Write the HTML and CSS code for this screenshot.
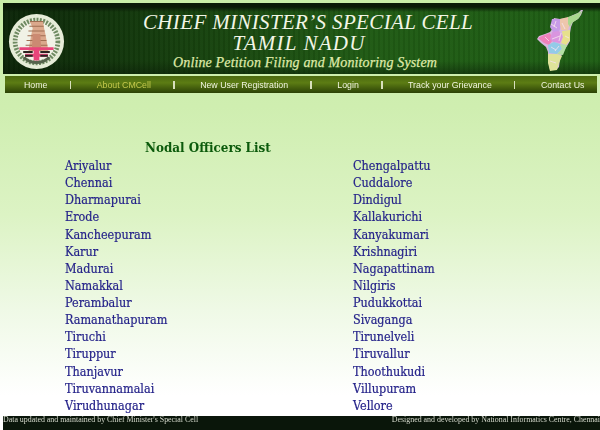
FILE: index.html
```html
<!DOCTYPE html>
<html lang="en">
<head>
<meta charset="utf-8">
<title>Nodal Officers List</title>
<link rel="stylesheet" href="styles.css">
</head>
<body>
<div class="page">
  <header class="banner">
    <svg class="emblem" viewBox="0 0 60 60" aria-hidden="true">
      <circle cx="30" cy="30" r="29" fill="#e6ecd8"/>
      <circle cx="30" cy="30" r="22.500" fill="#f1f2e6" stroke="#6f8a62" stroke-width="5" stroke-dasharray="2 1.400"/>
      <path d="M23 9h14l1 7 1.500 7 1.500 8 1.500 9h-21l1.500-9 1.500-8 1.500-7z" fill="#dba88c"/>
      <path d="M23 9h14M22.500 14h15M21.500 19h17M20.500 24h19M19.500 29h21M18.500 34h23" stroke="#a06e52" stroke-width="1.200"/>
      <path d="M26 22h8l1 18h-10z" fill="#cb8a72"/>
      <path d="M12 36h36v3H33v4h9v3h-9v4h-6v-4h-9v-3h9v-4H12z" fill="#e8447a"/>
      <path d="M16 40h10v2H16zM34 40h10v2H34zM18 44h8v2h-8zM34 44h8v2h-8z" fill="#2b2320"/>
      <path d="M15 47a20 20 0 0 0 30 0l-3-1a18 18 0 0 1-24 0z" fill="#55634c"/>
    </svg>
    <div class="titles">
      <h1 class="title title-first">CHIEF MINISTER’S SPECIAL CELL</h1>
      <div class="title title-second">TAMIL NADU</div>
      <div class="subtitle">Online Petition Filing and Monitoring System</div>
    </div>
    <svg class="map" viewBox="0 0 46 64" aria-hidden="true">
      <path d="M46 1l-2 5-3 4-5 3-2 5-1 6 0 8-3 5-4 6-3 7-1 8-3 3-6 0-1-5-1-7 0-6-2-5-5-4-4-4 2-3 6-2 5-2 3-4-1-5 2-5 6 1 7-1 6-3 5-2 3-3z" fill="#d8b9e0"/>
      <path d="M15 10l8 0 1 7-2 6-6 0-3-5z" fill="#c79be8"/>
      <path d="M1 29l6-3 6-2 3 7-4 5-5-2z" fill="#ef82bb"/>
      <path d="M23 10l8-2 2 6-2 7-7 0-1-5z" fill="#eec6ac"/>
      <path d="M15 23l7-1 4 6-3 6-7-1-3-3z" fill="#d995df"/>
      <path d="M25 22l8-1 0 10-4 5-5-2 2-6z" fill="#e7e08c"/>
      <path d="M11 36l6-3 6 2 2 5-5 5-8-1z" fill="#93cbe8"/>
      <path d="M23 35l7 1-4 10-6-1 5-5z" fill="#b4e0a4"/>
      <path d="M11 45l9 0 5 2-3 7-2 7-7 1-2-8z" fill="#dfe39a"/>
      <path d="M31 8l6-2 8-4-3 7-7 5-2 4-2-3z" fill="#a9d98e"/>
      <path d="M14 15l6 4M25 14l3 6M15 30l8-3M18 42l4-5M13 52l6 2M28 27l4 2M8 28l4 4M19 12l-2 6M24 24l-2 8M14 38l5 3" stroke="#f6e3ee" stroke-width="0.800" fill="none"/>
    </svg>
  </header>

  <nav class="nav">
    <a class="nav-link">Home</a><span class="nav-sep"></span>
    <a class="nav-link nav-active">About CMCell</a><span class="nav-sep"></span>
    <a class="nav-link">New User Registration</a><span class="nav-sep"></span>
    <a class="nav-link">Login</a><span class="nav-sep"></span>
    <a class="nav-link">Track your Grievance</a><span class="nav-sep"></span>
    <a class="nav-link">Contact Us</a>
  </nav>

  <main class="content">
    <h2 class="heading">Nodal Officers List</h2>
    <ul class="districts">
      <li>Ariyalur</li><li>Chengalpattu</li>
      <li>Chennai</li><li>Cuddalore</li>
      <li>Dharmapurai</li><li>Dindigul</li>
      <li>Erode</li><li>Kallakurichi</li>
      <li>Kancheepuram</li><li>Kanyakumari</li>
      <li>Karur</li><li>Krishnagiri</li>
      <li>Madurai</li><li>Nagapattinam</li>
      <li>Namakkal</li><li>Nilgiris</li>
      <li>Perambalur</li><li>Pudukkottai</li>
      <li>Ramanathapuram</li><li>Sivaganga</li>
      <li>Tiruchi</li><li>Tirunelveli</li>
      <li>Tiruppur</li><li>Tiruvallur</li>
      <li>Thanjavur</li><li>Thoothukudi</li>
      <li>Tiruvannamalai</li><li>Villupuram</li>
      <li>Virudhunagar</li><li>Vellore</li>
    </ul>
  </main>

  <footer class="footer">
    <span>Data updated and maintained by Chief Minister's Special Cell</span>
    <span>Designed and developed by National Informatics Centre, Chennai</span>
  </footer>
</div>
</body>
</html>
```

FILE: styles.css
```css
html, body {
  margin: 0;
  height: 100%;
}

body {
  background: #fff;
  overflow: hidden;
}

.page {
  width: 600px;
  height: 430px;
  box-sizing: border-box;
  padding-top: 3px;
  display: flex;
  flex-direction: column;
  background: linear-gradient(180deg, #c9eea8 0%, #cfeeb0 25%, #dcf3c4 50%, #eff9e6 72%, #ffffff 92%);
  filter: blur(0.35px);
}

.banner {
  margin-left: 3px;
  height: 71px;
  flex: none;
  display: flex;
  align-items: flex-start;
  background:
    linear-gradient(180deg, #0a1a07 0, #0a1a07 4px, rgba(10, 26, 7, 0) 9px, rgba(10, 26, 7, 0) 58px, rgba(10, 26, 7, 0.5) 71px),
    repeating-linear-gradient(90deg, rgba(0, 0, 0, 0.06) 0 2px, rgba(255, 255, 255, 0.015) 2px 5px),
    linear-gradient(90deg, #0c2609 0%, #16400e 30%, #205a14 60%, #1f5f15 100%);
}

.emblem {
  width: 57px;
  height: 57px;
  flex: none;
  margin: 10px 0 0 5px;
}

.titles {
  width: 472px;
  flex: none;
  box-sizing: border-box;
  padding-top: 8px;
  text-align: center;
  font-family: "Liberation Serif", serif;
  font-style: italic;
}

.title {
  margin: 0;
  font-size: 21px;
  font-weight: 400;
  line-height: 22px;
  color: #f3f6e6;
  white-space: nowrap;
}

.title-first {
  padding-left: 14px;
  letter-spacing: 0.35px;
}

.title-second {
  padding-right: 4px;
  letter-spacing: 1.2px;
  line-height: 19.5px;
  padding-top: 1px;
}

.subtitle {
  margin-top: 0;
  padding-left: 8px;
  font-size: 14px;
  line-height: 17px;
  font-weight: 400;
  letter-spacing: 0.14px;
  -webkit-text-stroke: 0.25px #dfe9a8;
  color: #dfe9a8;
  white-space: nowrap;
}

.map {
  width: 46px;
  height: 64px;
  flex: none;
  margin-top: 6px;
}

.nav {
  margin: 2px 3px 0 5px;
  height: 17px;
  flex: none;
  display: flex;
  align-items: center;
  padding-left: 19px;
  background: linear-gradient(180deg, #4c6a10 0%, #5c7c14 40%, #2c4206 100%);
  font-family: "Liberation Sans", sans-serif;
  font-size: 8.8px;
  color: #f1f5df;
}

.nav-link {
  white-space: nowrap;
}

.nav-active {
  color: #c4c84c;
}

.nav-sep {
  width: 1.5px;
  height: 8px;
  margin: 0 25.5px 0 22.2px;
  background: #d8dfbc;
}

.content {
  flex: 1;
  min-height: 0;
  padding-top: 46px;
  font-family: "DejaVu Serif Condensed", "DejaVu Serif", serif;
}

.heading {
  margin: 0 0 0 145px;
  font-size: 13.3px;
  line-height: 18px;
  font-weight: 700;
  color: #0b5a0b;
}

.districts {
  margin: 0 0 0 65px;
  padding: 0;
  list-style: none;
  display: grid;
  grid-template-columns: 288px 1fr;
  grid-auto-rows: 17.14px;
  font-size: 12.5px;
  line-height: 17px;
  color: #26248a;
  -webkit-text-stroke: 0.2px #26248a;
}

.footer {
  height: 14px;
  flex: none;
  margin-left: 3px;
  display: flex;
  justify-content: space-between;
  background: #0a160a;
  font-family: "Liberation Serif", serif;
  font-size: 7.9px;
  line-height: 8px;
  color: #d5d9cc;
  white-space: nowrap;
}
```
